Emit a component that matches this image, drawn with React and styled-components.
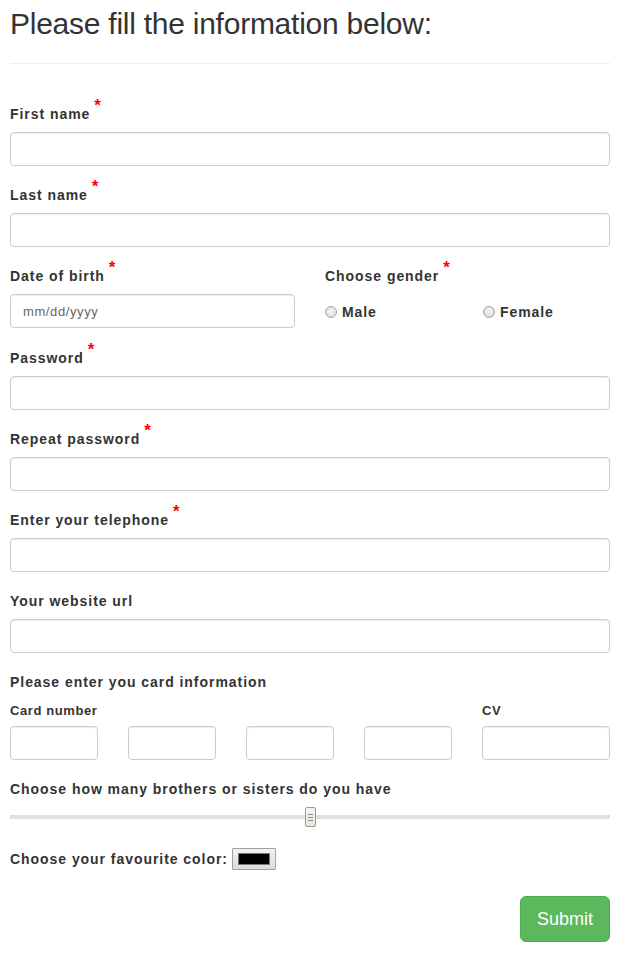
import styled, { createGlobalStyle } from "styled-components";

//GLOBAL
//=======================================
const GlobalStyle = createGlobalStyle`
  * {
    box-sizing: border-box;
  }
  body {
    margin: 0;
    background: #fff;
    color: #333;
    font-family: "Liberation Sans", Arial, sans-serif;
    font-size: 14px;
    line-height: 20px;
  }
`;

//STYLED COMPONENTS
//=======================================
const Page = styled.div`
  width: 600px;
  margin-left: 10px;
  padding-top: 7px;
`;

const Title = styled.h1`
  margin: 0;
  font-size: 30px;
  line-height: 33px;
  font-weight: 400;
  letter-spacing: -0.25px;
  color: #333;
  padding-bottom: 23px;
  border-bottom: 1px solid #eee;
`;

const Form = styled.form`
  padding-top: 40px;
  display: flex;
  flex-direction: column;
`;

const Group = styled.div`
  margin-bottom: ${(p) => p.$mb || "19px"};
`;

const Label = styled.label`
  display: block;
  font-weight: 700;
  font-size: ${(p) => (p.$small ? "13px" : "14px")};
  letter-spacing: ${(p) => (p.$small ? "0.6px" : "0.95px")};
  line-height: 20px;
  margin-bottom: ${(p) => p.$mb || "8px"};
`;

const Required = styled.span`
  color: #f00;
  font-size: 17px;
  line-height: 0;
  letter-spacing: 0;
  margin-left: 4px;
  position: relative;
  top: -8px;
`;

const Input = styled.input`
  display: block;
  width: 100%;
  height: 34px;
  padding: 6px 12px;
  font-family: inherit;
  font-size: 13px;
  color: #555;
  background: #fff;
  border: 1px solid #ccc;
  border-radius: 4px;
  box-shadow: inset 0 1px 1px rgba(0, 0, 0, 0.075);
  outline: none;
  &::placeholder {
    color: #666;
    letter-spacing: 0.6px;
  }
`;

const Row = styled.div`
  display: grid;
  grid-template-columns: 285px 285px;
  column-gap: 30px;
`;

const Radios = styled.div`
  display: grid;
  grid-template-columns: 158px auto;
  height: 35px;
  align-items: center;
`;

const RadioLabel = styled.label`
  display: flex;
  align-items: center;
  gap: 5px;
  font-weight: 700;
  font-size: 14px;
  letter-spacing: 0.9px;
`;

const Radio = styled.span`
  width: 12px;
  height: 12px;
  border-radius: 50%;
  border: 1px solid #a6a6a6;
  background: radial-gradient(circle at 50% 40%, #f4f4f4, #d6d6d6);
`;

const CardGrid = styled.div`
  display: grid;
  grid-template-columns: 88px 88px 88px 88px 1fr;
  column-gap: 30px;
`;

const Slider = styled.div`
  position: relative;
  height: 20px;
  margin-top: 8px;
  display: flex;
  align-items: center;
`;

const Track = styled.div`
  width: 100%;
  height: 4px;
  background: #e3ded7;
`;

const Thumb = styled.div`
  position: absolute;
  left: 295px;
  top: 0;
  width: 11px;
  height: 20px;
  border: 1px solid #9c9893;
  border-radius: 2px;
  background: linear-gradient(#f5f3f1, #e8e5e1);
  display: flex;
  flex-direction: column;
  align-items: center;
  justify-content: center;
  gap: 2px;
  span {
    display: block;
    width: 5px;
    height: 1px;
    background: #8d8a86;
  }
`;

const ColorRow = styled.div`
  display: flex;
  align-items: center;
  gap: 4px;
  margin-top: 21px;
  font-weight: 700;
  letter-spacing: 0.95px;
`;

const Swatch = styled.button`
  width: 44px;
  height: 22px;
  padding: 4px 5px;
  border: 1px solid #a3a3a3;
  border-radius: 1px;
  background: linear-gradient(#f2f2f2, #dcdcdc);
  display: flex;
  span {
    flex: 1;
    background: #000;
    border: 1px solid #777;
  }
`;

const Actions = styled.div`
  display: flex;
  justify-content: flex-end;
  margin-top: 26px;
`;

const Submit = styled.button`
  height: 46px;
  padding: 10px 16px;
  font-family: inherit;
  font-size: 18px;
  line-height: 24px;
  color: #fff;
  background: #5cb85c;
  border: 1px solid #4cae4c;
  border-radius: 6px;
`;
//=======================================

const fields = [
  { label: "First name", req: true },
  { label: "Last name", req: true },
];

const moreFields = [
  { label: "Password", req: true, type: "password" },
  { label: "Repeat password", req: true, type: "password" },
  { label: "Enter your telephone", req: true, type: "tel" },
  { label: "Your website url", req: false, type: "url" },
];

const Field = ({ label, req, type = "text" }) => (
  <Group>
    <Label>
      {label}
      {req && <Required>*</Required>}
    </Label>
    <Input type={type} />
  </Group>
);

const App = () => {
  return (
    <>
      <GlobalStyle />
      <Page>
        <Title>Please fill the information below:</Title>
        <Form onSubmit={(e) => e.preventDefault()}>
          {fields.map((f) => (
            <Field key={f.label} {...f} />
          ))}
          <Group>
            <Row>
              <div>
                <Label>
                  Date of birth<Required>*</Required>
                </Label>
                <Input type="text" placeholder="mm/dd/yyyy" />
              </div>
              <div>
                <Label>
                  Choose gender<Required>*</Required>
                </Label>
                <Radios>
                  <RadioLabel>
                    <Radio />
                    Male
                  </RadioLabel>
                  <RadioLabel>
                    <Radio />
                    Female
                  </RadioLabel>
                </Radios>
              </div>
            </Row>
          </Group>
          {moreFields.map((f) => (
            <Field key={f.label} {...f} />
          ))}
          <Group $mb="19px">
            <Label $mb="9px">Please enter you card information</Label>
            <CardGrid>
              <Label $small $mb="5px">Card number</Label>
              <span />
              <span />
              <span />
              <Label $small $mb="5px">CV</Label>
              <Input />
              <Input />
              <Input />
              <Input />
              <Input />
            </CardGrid>
          </Group>
          <div>
            <Label $mb="0">Choose how many brothers or sisters do you have</Label>
            <Slider>
              <Track />
              <Thumb>
                <span />
                <span />
                <span />
              </Thumb>
            </Slider>
          </div>
          <ColorRow>
            Choose your favourite color:
            <Swatch type="button">
              <span />
            </Swatch>
          </ColorRow>
          <Actions>
            <Submit type="submit">Submit</Submit>
          </Actions>
        </Form>
      </Page>
    </>
  );
};

export default App;
